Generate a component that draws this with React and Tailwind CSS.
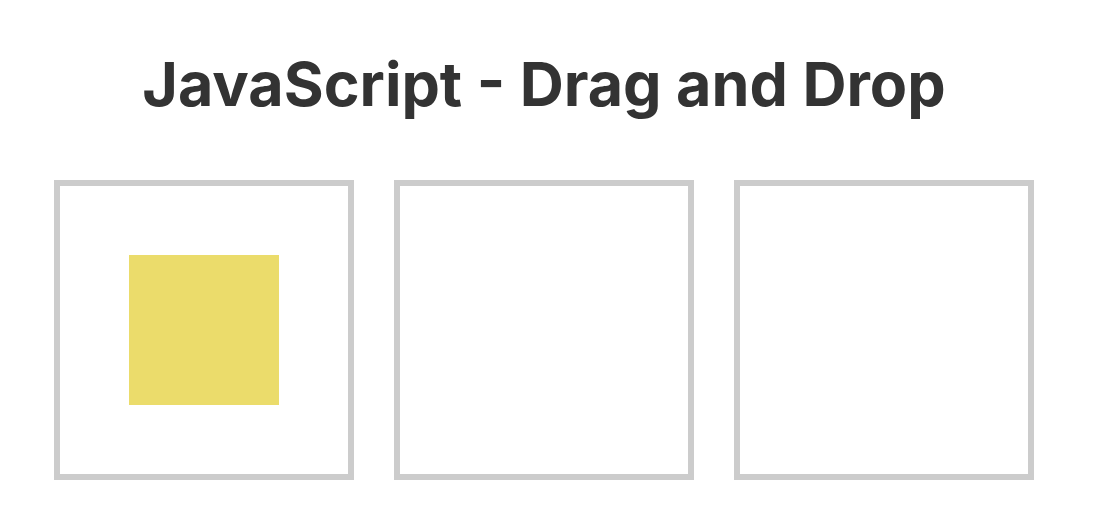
import React from 'react';

const App = () => {
    const boxes = [0, 1, 2];
    return (
        <div className="min-h-screen bg-white pr-2 font-['Inter','Liberation_Sans',sans-serif]">
            <h1 className="pt-[47px] text-center text-[61px] font-bold leading-[74px] text-[#333333]">
                JavaScript - Drag and Drop
            </h1>
            <div className="mt-[59px] flex justify-center gap-10">
                {boxes.map(i => (
                    <div key={i} className="flex h-[300px] w-[300px] items-center justify-center border-[6px] border-[#cccccc] bg-white">
                        {i === 0 && <div draggable className="h-[150px] w-[150px] bg-[#ebdc6b]" />}
                    </div>
                ))}
            </div>
        </div>
    );
};

export default App;
